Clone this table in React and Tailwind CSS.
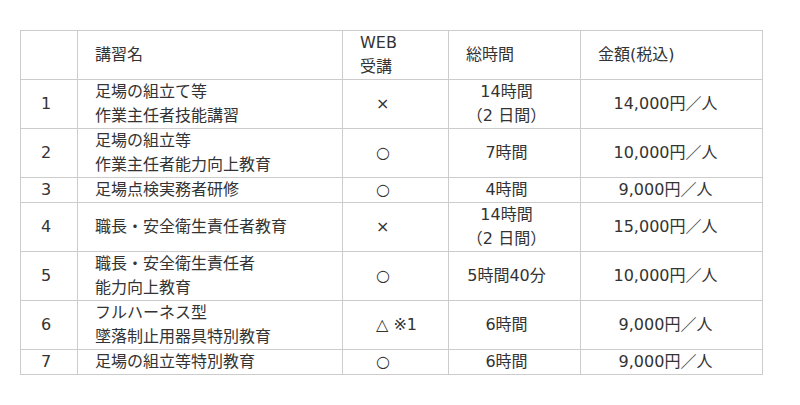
import React from 'react';

const rows = [
  { no: '1', name: ['足場の組立て等', '作業主任者技能講習'], web: '×', time: ['14時間', '（2 日間）'], price: '14,000円／人' },
  { no: '2', name: ['足場の組立等', '作業主任者能力向上教育'], web: '○', time: ['7時間'], price: '10,000円／人' },
  { no: '3', name: ['足場点検実務者研修'], web: '○', time: ['4時間'], price: '9,000円／人' },
  { no: '4', name: ['職長・安全衛生責任者教育'], web: '×', time: ['14時間', '（2 日間）'], price: '15,000円／人' },
  { no: '5', name: ['職長・安全衛生責任者', '能力向上教育'], web: '○', time: ['5時間40分'], price: '10,000円／人' },
  { no: '6', name: ['フルハーネス型', '墜落制止用器具特別教育'], web: '△ ※1', time: ['6時間'], price: '9,000円／人' },
  { no: '7', name: ['足場の組立等特別教育'], web: '○', time: ['6時間'], price: '9,000円／人' },
];

const cell = 'border border-[#cccccc] p-0 align-middle';

export default function App() {
  return (
    <div className="w-[800px] h-[405px] bg-white pt-[30px] pl-[20px] text-[#333333] text-[16px] leading-[24px] font-['DejaVu_Sans','Noto_Sans_CJK_JP',sans-serif]">
      <table className="table-fixed border-collapse w-[742px]">
        <colgroup>
          <col className="w-[57px]" />
          <col className="w-[265px]" />
          <col className="w-[106px]" />
          <col className="w-[132px]" />
          <col className="w-[182px]" />
        </colgroup>
        <thead>
          <tr>
            <th className={`${cell} font-normal`}></th>
            <th className={`${cell} font-normal text-left pl-[17px]`}>講習名</th>
            <th className={`${cell} font-normal text-left pl-[17px]`}>
              <div>WEB</div>
              <div>受講</div>
            </th>
            <th className={`${cell} font-normal text-left pl-[17px]`}>総時間</th>
            <th className={`${cell} font-normal text-left pl-[17px]`}>金額(税込)</th>
          </tr>
        </thead>
        <tbody>
          {rows.map((r) => (
            <tr key={r.no}>
              <td className={`${cell} text-left pl-[20px]`}>{r.no}</td>
              <td className={`${cell} text-left pl-[17px]`}>
                {r.name.map((n) => (
                  <div key={n}>{n}</div>
                ))}
              </td>
              <td className={`${cell} text-left pl-[33px]`}>{r.web}</td>
              <td className={`${cell} text-center pr-[16px]`}>
                {r.time.map((t) => (
                  <div key={t}>{t}</div>
                ))}
              </td>
              <td className={`${cell} text-center pr-[12px]`}>{r.price}</td>
            </tr>
          ))}
        </tbody>
      </table>
    </div>
  );
}
